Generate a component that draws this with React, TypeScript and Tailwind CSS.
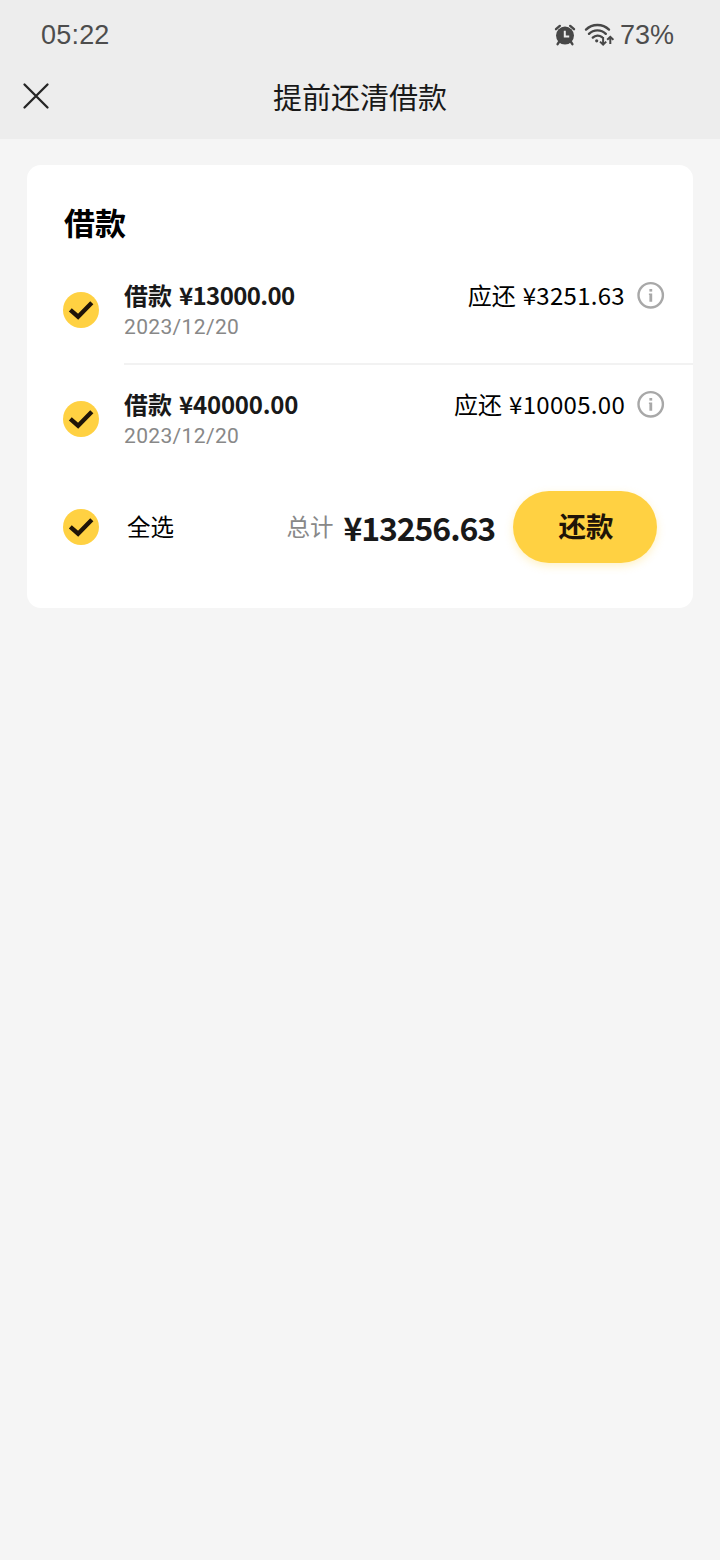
import { useState } from 'react';

const loans = [
  { id: 1, amount: '13000.00', date: '2023/12/20', due: '3251.63', tracking: 'tracking-[-0.6px]' },
  { id: 2, amount: '40000.00', date: '2023/12/20', due: '10005.00', tracking: 'tracking-[-0.2px]' },
];

function AlarmIcon() {
  return (
    <svg className="w-[22px] h-[22px]" viewBox="0 0 22 22" fill="none" aria-hidden="true">
      <circle cx="11" cy="11.6" r="9" fill="#474747" />
      <path d="M2 5.2 5.8 1.9M20 5.200 16.200 1.900M5 18l-1.400 2.200M17 18l1.400 2.200" stroke="#474747" strokeWidth="2.4" strokeLinecap="round" />
      <path d="M10.800 6.800v5.600h4.400" stroke="#ededed" strokeWidth="2" />
    </svg>
  );
}

function WifiIcon() {
  return (
    <svg className="w-[30px] h-6" viewBox="0 0 30 24" fill="none" stroke="#474747" aria-hidden="true">
      <path d="M2 6.600c6.200-6.200 16.600-6.200 23 0" strokeWidth="2.4" strokeLinecap="round" />
      <path d="M5 10.800c4.600-4.600 12.200-4.600 16.800 0" strokeWidth="2.4" strokeLinecap="round" />
      <path d="M8.800 14.600c2.600-2.600 6.600-2.600 9.200-.4" strokeWidth="2.4" strokeLinecap="round" />
      <circle cx="12.7" cy="17.8" r="1.6" fill="#474747" stroke="none" />
      <path d="M19.100 14v7.400M16 18.600l3.100 3 3.100-3M26.300 21v-7.200M23.200 16.800l3.100-3 3.100 3" strokeWidth="2" />
    </svg>
  );
}

function InfoIcon() {
  return (
    <svg className="w-7 h-7" viewBox="0 0 28 28" aria-hidden="true">
      <circle cx="13.7" cy="14.3" r="12.2" fill="none" stroke="#a8a8a8" strokeWidth="2.4" />
      <rect x="12.4" y="8" width="2.8" height="2.6" fill="#a8a8a8" />
      <path d="M11.900 12.600h3.300v8.200h-2.800v-6.900h-.5z" fill="#a8a8a8" />
    </svg>
  );
}

function Check({ checked, label, onClick }: { checked: boolean; label: string; onClick: () => void }) {
  return (
    <button
      role="checkbox"
      aria-checked={checked}
      aria-label={label}
      onClick={onClick}
      className={`w-9 h-9 shrink-0 rounded-full ${checked ? 'bg-[#ffd142]' : 'border-2 border-[#c8c8c8]'}`}
    >
      {checked && (
        <svg className="w-9 h-9" viewBox="0 0 36 36" fill="none" aria-hidden="true">
          <path d="m7.300 17.800 7.800 6.900L28.800 10.800" stroke="#1f1408" strokeWidth="4.4" />
        </svg>
      )}
    </button>
  );
}

export default function App() {
  const [selected, setSelected] = useState<number[]>(loans.map((l) => l.id));
  const allSelected = selected.length === loans.length;
  const total = loans
    .filter((l) => selected.includes(l.id))
    .reduce((sum, l) => sum + Number(l.due), 0)
    .toFixed(2);

  const toggle = (id: number) => {
    setSelected((prev) => (prev.includes(id) ? prev.filter((x) => x !== id) : [...prev, id]));
  };

  return (
    <div className="min-h-[1560px] w-full bg-[#f5f5f5] font-['Noto_Sans_CJK_SC',sans-serif] text-black">
      <header className="h-[139px] bg-[#ededed]">
        <div className="flex h-[69px] items-center justify-between pl-[41px] pr-[46px] font-['Liberation_Sans',sans-serif] text-[27px] text-[#4d4d4d]">
          <span className="pt-0.5 tracking-[0.2px]">05:22</span>
          <div className="flex items-center">
            <AlarmIcon />
            <span className="ml-2 mr-1.5">
              <WifiIcon />
            </span>
            <span className="pt-0.5">73%</span>
          </div>
        </div>
        <div className="grid h-[55px] grid-cols-[72px_1fr_72px] items-center">
          <button aria-label="关闭" className="flex h-full items-center pl-[22px]">
            <svg className="w-7 h-7 -mt-0.5" viewBox="0 0 28 28" aria-hidden="true">
              <path d="M2.500 2.500l23 23M25.500 2.500l-23 23" stroke="#252525" strokeWidth="2.3" strokeLinecap="round" />
            </svg>
          </button>
          <h1 className="text-center text-[29px] leading-[55px] text-[#191919]">提前还清借款</h1>
        </div>
      </header>

      <main className="px-[27px] pt-[26px]">
        <section className="h-[443px] overflow-hidden rounded-[14px] bg-white pl-9 pt-[35px]">
          <h2 className="pl-px text-[31px] font-bold leading-[44px]">借款</h2>

          <div className="mt-3">
            {loans.map((loan, i) => (
              <div key={loan.id} className="flex h-[109px]">
                <div className="w-[61px] pt-9">
                  <Check
                    checked={selected.includes(loan.id)}
                    label={`借款 ${loan.amount}`}
                    onClick={() => toggle(loan.id)}
                  />
                </div>
                <div className={`flex flex-1 justify-between pr-7 pt-[22px] ${i < loans.length - 1 ? 'border-b-2 border-[#f2f2f2]' : ''}`}>
                  <div>
                    <p className="flex gap-[7px] text-[24px] font-bold leading-[34px] text-[#191919]">
                      <span>借款</span>
                      <span className={loan.tracking}>¥{loan.amount}</span>
                    </p>
                    <p className="mt-px font-['Roboto',sans-serif] text-[21px] leading-[28px] tracking-[0.35px] text-[#888888]">{loan.date}</p>
                  </div>
                  <div className="flex h-[34px] items-center gap-3 text-[24px] leading-[34px]">
                    <p className="flex gap-[7px]">
                      <span>应还</span>
                      <span className="tracking-[0.3px]">¥{loan.due}</span>
                    </p>
                    <button aria-label="详情">
                      <InfoIcon />
                    </button>
                  </div>
                </div>
              </div>
            ))}
          </div>

          <div className="mt-[17px] flex h-[72px] items-center pr-9">
            <Check
              checked={allSelected}
              label="全选"
              onClick={() => setSelected(allSelected ? [] : loans.map((l) => l.id))}
            />
            <span className="ml-7 text-[23.5px]">全选</span>
            <div className="ml-auto flex items-center">
              <span className="text-[23.5px] text-[#888888]">总计</span>
              <span className="ml-2.5 text-[32px] font-bold leading-[44px] tracking-[-1.1px] text-[#191919]">¥{total}</span>
              <button className="ml-[18px] h-[72px] w-36 rounded-full bg-[#ffd142] pb-0.5 pl-0.5 text-[27.5px] font-bold text-[#1f1408] shadow-[0_3px_8px_rgba(255,209,66,0.3)]">
                还款
              </button>
            </div>
          </div>
        </section>
      </main>
    </div>
  );
}
